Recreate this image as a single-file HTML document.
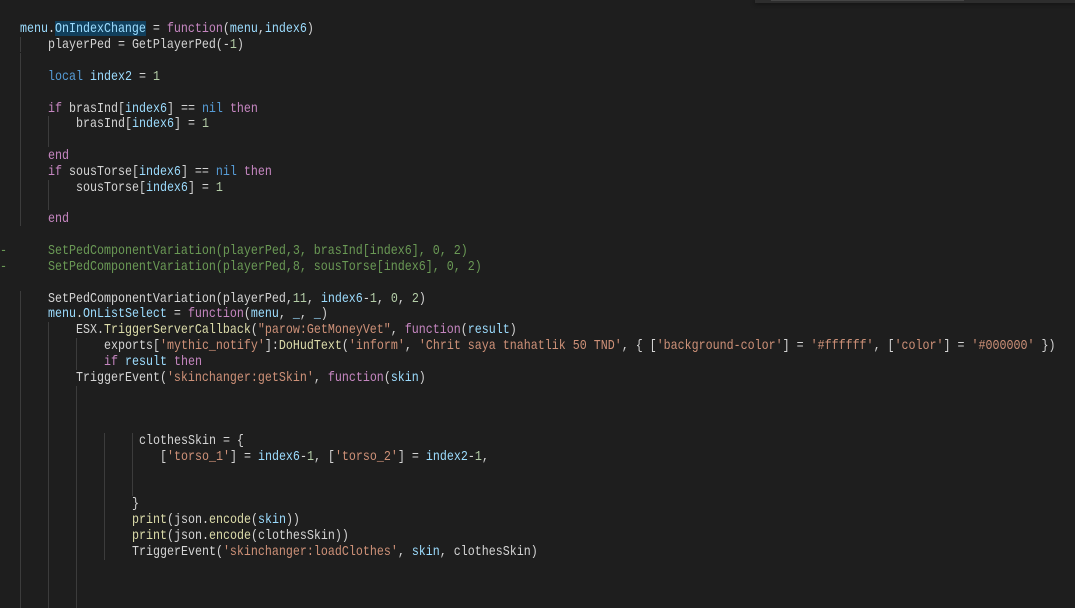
<!DOCTYPE html>
<html><head><meta charset="utf-8"><style>
html,body{margin:0;padding:0;background:#1e1e1e;width:1075px;height:608px;overflow:hidden}
#e{position:relative;width:1075px;height:608px;overflow:hidden;font-family:"Liberation Mono",monospace;font-size:11.67px;color:#d4d4d4}
.l{position:absolute;white-space:pre;height:16px;line-height:16px;transform-origin:0 11px;transform:scaleY(1.18)}
.g{position:absolute;width:1px;background:#3c3c3c}
.f{color:#dcdcaa}.v{color:#9cdcfe}.k{color:#c586c0}.b{color:#569cd6}.n{color:#b5cea8}.s{color:#ce9178}.c{color:#6a9955}
</style></head><body><div id="e">
<div style="position:absolute;left:755px;top:0;width:320px;height:3px;background:#2d2d2d;box-shadow:0 1px 4px #111"></div>
<div style="position:absolute;left:771px;top:0;width:193px;height:1px;background:#454545"></div>
<div style="position:absolute;left:55px;top:21px;width:91px;height:15px;background:#113f5c"></div>

<div class="g" style="left:20px;top:37px;height:15px"></div>
<div class="g" style="left:20px;top:53px;height:173px"></div>
<div class="g" style="left:20px;top:291px;height:317px"></div>
<div class="g" style="left:48px;top:116px;height:31px"></div>
<div class="g" style="left:48px;top:180px;height:30px"></div>
<div class="g" style="left:48px;top:322px;height:286px"></div>
<div class="g" style="left:76px;top:338px;height:32px"></div>
<div class="g" style="left:76px;top:386px;height:222px"></div>
<div class="g" style="left:104px;top:433px;height:127px"></div>
<div class="g" style="left:132px;top:433px;height:63px"></div>

<div class="l" style="left:20px;top:21px"><span class="v">menu</span>.<span class="v">OnIndexChange</span> = <span class="k">function</span>(<span class="v">menu</span>,<span class="v">index6</span>)</div>
<div class="l" style="left:48px;top:37px">playerPed = GetPlayerPed(-<span class="n">1</span>)</div>
<div class="l" style="left:48px;top:69px"><span class="b">local</span> <span class="v">index2</span> = <span class="n">1</span></div>
<div class="l" style="left:48px;top:101px"><span class="k">if</span> brasInd[<span class="v">index6</span>] == <span class="b">nil</span> <span class="k">then</span></div>
<div class="l" style="left:76px;top:116px">brasInd[<span class="v">index6</span>] = <span class="n">1</span></div>
<div class="l" style="left:48px;top:148px"><span class="k">end</span></div>
<div class="l" style="left:48px;top:164px"><span class="k">if</span> sousTorse[<span class="v">index6</span>] == <span class="b">nil</span> <span class="k">then</span></div>
<div class="l" style="left:76px;top:180px">sousTorse[<span class="v">index6</span>] = <span class="n">1</span></div>
<div class="l" style="left:48px;top:211px"><span class="k">end</span></div>
<div class="l c" style="left:0;top:243px">-</div>
<div class="l c" style="left:48px;top:243px">SetPedComponentVariation(playerPed,3, brasInd[index6], 0, 2)</div>
<div class="l c" style="left:0;top:259px">-</div>
<div class="l c" style="left:48px;top:259px">SetPedComponentVariation(playerPed,8, sousTorse[index6], 0, 2)</div>
<div class="l" style="left:48px;top:291px">SetPedComponentVariation(playerPed,<span class="n">11</span>, <span class="v">index6</span>-<span class="n">1</span>, <span class="n">0</span>, <span class="n">2</span>)</div>
<div class="l" style="left:48px;top:306px"><span class="v">menu</span>.<span class="v">OnListSelect</span> = <span class="k">function</span>(<span class="v">menu</span>, <span class="v">_</span>, <span class="v">_</span>)</div>
<div class="l" style="left:76px;top:322px">ESX.<span class="f">TriggerServerCallback</span>(<span class="s">"parow:GetMoneyVet"</span>, <span class="k">function</span>(<span class="v">result</span>)</div>
<div class="l" style="left:104px;top:338px"><span>exports</span>[<span class="s">'mythic_notify'</span>]:<span class="f">DoHudText</span>(<span class="s">'inform'</span>, <span class="s">'Chrit saya tnahatlik 50 TND'</span>, { [<span class="s">'background-color'</span>] = <span class="s">'#ffffff'</span>, [<span class="s">'color'</span>] = <span class="s">'#000000'</span> })</div>
<div class="l" style="left:104px;top:354px"><span class="k">if</span> <span class="v">result</span> <span class="k">then</span></div>
<div class="l" style="left:76px;top:370px">TriggerEvent(<span class="s">'skinchanger:getSkin'</span>, <span class="k">function</span>(<span class="v">skin</span>)</div>
<div class="l" style="left:139px;top:433px">clothesSkin = {</div>
<div class="l" style="left:160px;top:449px">[<span class="s">'torso_1'</span>] = <span class="v">index6</span>-<span class="n">1</span>, [<span class="s">'torso_2'</span>] = <span class="v">index2</span>-<span class="n">1</span>,</div>
<div class="l" style="left:132px;top:496px">}</div>
<div class="l" style="left:132px;top:512px"><span class="f">print</span>(json.<span class="f">encode</span>(<span class="v">skin</span>))</div>
<div class="l" style="left:132px;top:528px"><span class="f">print</span>(json.<span class="f">encode</span>(clothesSkin))</div>
<div class="l" style="left:132px;top:544px">TriggerEvent(<span class="s">'skinchanger:loadClothes'</span>, <span class="v">skin</span>, clothesSkin)</div>
</div></body></html>
